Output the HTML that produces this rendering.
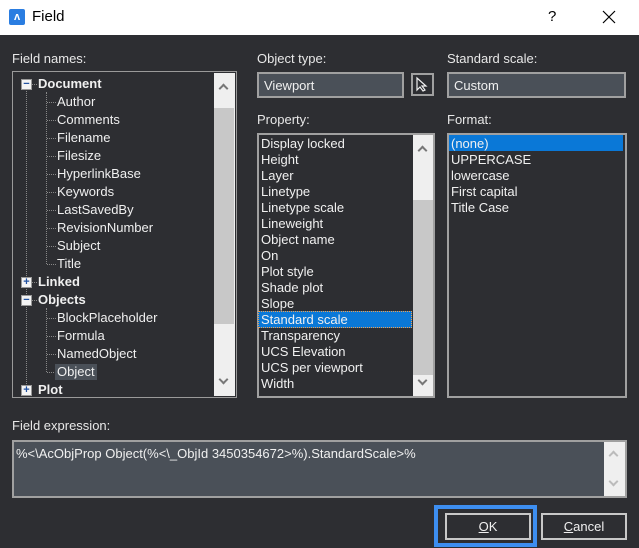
<!DOCTYPE html>
<html><head><meta charset="utf-8"><style>
*{box-sizing:border-box;margin:0;padding:0}
body{width:639px;height:548px;background:#2d2e32;font-family:"Liberation Sans",sans-serif;font-size:13px;color:#f0f0f0;position:relative;overflow:hidden}
.a{position:absolute}
.tb{left:0;top:0;width:639px;height:35px;background:#fff;color:#000}
.lbl{font-size:13px;color:#e8e8e8}
.box{border:1px solid #9a9a9a;background:#2d2e32}
.inp{border:2px solid #a0a0a0;background:#4a5058;padding:4px 5px;font-size:13px}
.sb{background:#efefef}
.th{background:#c8c8c8}
.row{position:absolute;height:16px;line-height:16px;white-space:nowrap}
.chev{position:absolute;left:6px;width:7px;height:7px;border-left:2px solid #777;border-top:2px solid #777}
.exp{position:absolute;width:11px;height:11px;background:#f4f4f4;border:1px solid #999;color:#2050a0;font-size:11px;line-height:9px;text-align:center;font-weight:bold}
.dh{position:absolute;border-top:1px dotted #888;width:9px}
.dv{position:absolute;border-left:1px dotted #888}
</style></head><body>
<div class="a tb">
 <div class="a" style="left:9px;top:9px;width:16px;height:16px;background:#2a7de1;border-radius:2px;color:#fff;font-size:11px;font-weight:bold;text-align:center;line-height:16px">ʌ</div>
 <div class="a" style="left:32px;top:8px;font-size:15px">Field</div>
 <div class="a" style="left:548px;top:8px;font-size:15px">?</div>
 <svg class="a" style="left:602px;top:10px" width="14" height="14"><path d="M1 1 L13 13 M13 1 L1 13" stroke="#000" stroke-width="1.2"/></svg>
</div>

<div class="a lbl" style="left:12px;top:51px">Field names:</div>
<div class="a box" style="left:12px;top:71px;width:225px;height:327px"></div>
<div class="a dv" style="left:26px;top:80px;height:310px"></div>
<div class="a dv" style="left:46px;top:92px;height:172px"></div>
<div class="a dv" style="left:46px;top:308px;height:64px"></div>
<div class="a" style="left:0;top:1px">
 <div class="exp" style="left:21px;top:78px">−</div><div class="dh" style="left:32px;top:83px;width:5px"></div>
 <div class="row" style="left:38px;top:75px;font-weight:bold">Document</div>
 <div class="exp" style="left:21px;top:276px">+</div><div class="dh" style="left:32px;top:281px;width:5px"></div>
 <div class="row" style="left:38px;top:273px;font-weight:bold">Linked</div>
 <div class="exp" style="left:21px;top:294px">−</div><div class="dh" style="left:32px;top:299px;width:5px"></div>
 <div class="row" style="left:38px;top:291px;font-weight:bold">Objects</div>
 <div class="exp" style="left:21px;top:384px">+</div>
 <div class="row" style="left:38px;top:381px;font-weight:bold;height:14px;overflow:hidden">Plot</div>
</div>
<div class="a" style="left:0;top:1px">
 <div class="dh" style="left:47px;top:101px"></div><div class="row" style="left:57px;top:93px">Author</div>
 <div class="dh" style="left:47px;top:119px"></div><div class="row" style="left:57px;top:111px">Comments</div>
 <div class="dh" style="left:47px;top:137px"></div><div class="row" style="left:57px;top:129px">Filename</div>
 <div class="dh" style="left:47px;top:155px"></div><div class="row" style="left:57px;top:147px">Filesize</div>
 <div class="dh" style="left:47px;top:173px"></div><div class="row" style="left:57px;top:165px">HyperlinkBase</div>
 <div class="dh" style="left:47px;top:191px"></div><div class="row" style="left:57px;top:183px">Keywords</div>
 <div class="dh" style="left:47px;top:209px"></div><div class="row" style="left:57px;top:201px">LastSavedBy</div>
 <div class="dh" style="left:47px;top:227px"></div><div class="row" style="left:57px;top:219px">RevisionNumber</div>
 <div class="dh" style="left:47px;top:245px"></div><div class="row" style="left:57px;top:237px">Subject</div>
 <div class="dh" style="left:47px;top:263px"></div><div class="row" style="left:57px;top:255px">Title</div>
 <div class="dh" style="left:47px;top:317px"></div><div class="row" style="left:57px;top:309px">BlockPlaceholder</div>
 <div class="dh" style="left:47px;top:335px"></div><div class="row" style="left:57px;top:327px">Formula</div>
 <div class="dh" style="left:47px;top:353px"></div><div class="row" style="left:57px;top:345px">NamedObject</div>
 <div class="dh" style="left:47px;top:371px"></div><div class="row" style="left:55px;top:363px;background:#4a5058;padding:0 2px">Object</div>
</div>
<div class="a sb" style="left:214px;top:73px;width:21px;height:323px">
 <div class="chev" style="top:12px;transform:rotate(45deg)"></div>
 <div class="a th" style="left:0;top:35px;width:20px;height:216px"></div>
 <div class="chev" style="top:303px;transform:rotate(225deg)"></div>
</div>

<div class="a lbl" style="left:257px;top:51px">Object type:</div>
<div class="a inp" style="left:257px;top:72px;width:147px;height:26px">Viewport</div>
<div class="a" style="left:411px;top:73px;width:23px;height:23px;border:2px solid #a0a0a0">
 <svg width="19" height="19" viewBox="0 0 19 19" style="position:absolute;left:0;top:0"><path d="M4 3 L4 15 L7 12 L10 16 L12 15 L9 11 L13 11 Z" fill="none" stroke="#f0f0f0" stroke-width="1.2"/></svg>
</div>
<div class="a lbl" style="left:447px;top:51px">Standard scale:</div>
<div class="a inp" style="left:447px;top:72px;width:179px;height:26px">Custom</div>

<div class="a lbl" style="left:257px;top:112px">Property:</div>
<div class="a box" style="left:257px;top:133px;width:178px;height:265px;border:2px solid #a0a0a0"></div>
<div class="a" style="left:261px;top:136px;line-height:16px">
Display locked<br>Height<br>Layer<br>Linetype<br>Linetype scale<br>Lineweight<br>Object name<br>On<br>Plot style<br>Shade plot<br>Slope<br><br>Transparency<br>UCS Elevation<br>UCS per viewport<br>Width</div>
<div class="a" style="left:258px;top:311px;width:154px;height:17px;background:#0a78d7;border:1px dotted #f0a050;line-height:15px;padding-left:2px">Standard scale</div>
<div class="a sb" style="left:413px;top:135px;width:20px;height:261px">
 <div class="chev" style="top:12px;transform:rotate(45deg)"></div>
 <div class="a th" style="left:0;top:65px;width:20px;height:175px"></div>
 <div class="chev" style="top:242px;transform:rotate(225deg)"></div>
</div>

<div class="a lbl" style="left:447px;top:112px">Format:</div>
<div class="a box" style="left:447px;top:133px;width:180px;height:265px;border:2px solid #a0a0a0"></div>
<div class="a" style="left:449px;top:135px;width:174px;height:16px;background:#0a78d7"></div>
<div class="a" style="left:451px;top:136px;line-height:16px">(none)<br>UPPERCASE<br>lowercase<br>First capital<br>Title Case</div>

<div class="a lbl" style="left:12px;top:418px">Field expression:</div>
<div class="a" style="left:12px;top:440px;width:615px;height:58px;border:2px solid #a0a0a0;background:#4a5058;padding:4px 2px">%&lt;\AcObjProp Object(%&lt;\_ObjId 3450354672&gt;%).StandardScale&gt;%</div>
<div class="a sb" style="left:604px;top:442px;width:21px;height:54px">
 <div class="chev" style="top:10px;border-color:#bbb;transform:rotate(45deg)"></div>
 <div class="chev" style="top:36px;border-color:#bbb;transform:rotate(225deg)"></div>
</div>

<div class="a" style="left:434px;top:505px;width:103px;height:42px;border:4px solid #3d8ef0"></div>
<div class="a" style="left:445px;top:513px;width:86px;height:27px;border:2px solid #c8c8c8;text-align:center;line-height:24px"><u>O</u>K</div>
<div class="a" style="left:541px;top:513px;width:86px;height:27px;border:2px solid #c8c8c8;text-align:center;line-height:24px"><u>C</u>ancel</div>
</body></html>
